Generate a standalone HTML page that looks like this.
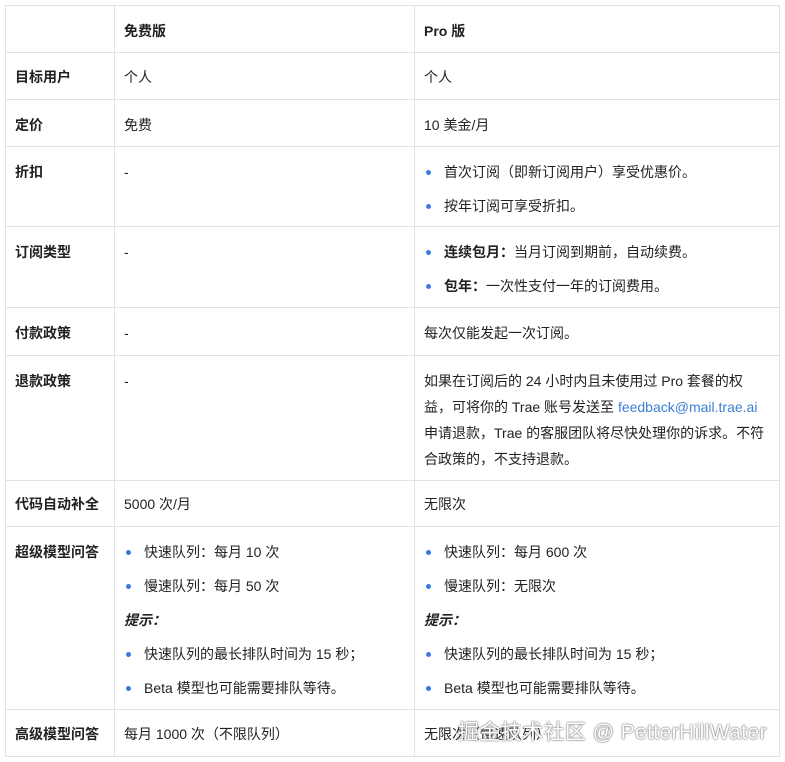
<!DOCTYPE html>
<html><head><meta charset="utf-8"><style>
body{margin:0;width:785px;height:762px;background:#fff;position:relative;overflow:hidden;font-family:"Liberation Sans","Noto Sans CJK SC",sans-serif;font-size:14px;color:#222}
.h{position:absolute;background:#e1e2e4;height:1px}
.v{position:absolute;background:#e1e2e4;width:1px}
.t{position:absolute;line-height:20px;white-space:nowrap;margin-top:1px}
.b{font-weight:bold}
.d{position:absolute;width:5px;height:5px;border-radius:50%;background:#3a7be0;margin-top:1px}
a{color:#3b7fd4;text-decoration:none}
.wm{position:absolute;left:458px;top:716px;font-size:21px;color:#fff;text-shadow:0 0 1px #555,0 0 2px #777;letter-spacing:0.4px;white-space:nowrap}
</style></head><body>
<div class="h" style="left:5px;width:775px;top:5px"></div>
<div class="h" style="left:5px;width:775px;top:52px"></div>
<div class="h" style="left:5px;width:775px;top:99px"></div>
<div class="h" style="left:5px;width:775px;top:146px"></div>
<div class="h" style="left:5px;width:775px;top:226px"></div>
<div class="h" style="left:5px;width:775px;top:307px"></div>
<div class="h" style="left:5px;width:775px;top:355px"></div>
<div class="h" style="left:5px;width:775px;top:480px"></div>
<div class="h" style="left:5px;width:775px;top:526px"></div>
<div class="h" style="left:5px;width:775px;top:709px"></div>
<div class="h" style="left:5px;width:775px;top:756px"></div>
<div class="v" style="left:5px;top:5px;height:752px"></div>
<div class="v" style="left:114px;top:5px;height:752px"></div>
<div class="v" style="left:414px;top:5px;height:752px"></div>
<div class="v" style="left:779px;top:5px;height:752px"></div>

<div class="t b" style="left:124px;top:20px">免费版</div>
<div class="t b" style="left:424px;top:20px">Pro 版</div>

<div class="t b" style="left:15px;top:66px">目标用户</div>
<div class="t" style="left:124px;top:66px">个人</div>
<div class="t" style="left:424px;top:66px">个人</div>

<div class="t b" style="left:15px;top:114px">定价</div>
<div class="t" style="left:124px;top:114px">免费</div>
<div class="t" style="left:424px;top:114px">10 美金/月</div>

<div class="t b" style="left:15px;top:161px">折扣</div>
<div class="t" style="left:124px;top:161px">-</div>
<div class="d" style="left:426px;top:169px"></div><div class="t" style="left:444px;top:161px">首次订阅（即新订阅用户）享受优惠价。</div>
<div class="d" style="left:426px;top:203px"></div><div class="t" style="left:444px;top:195px">按年订阅可享受折扣。</div>

<div class="t b" style="left:15px;top:241px">订阅类型</div>
<div class="t" style="left:124px;top:241px">-</div>
<div class="d" style="left:426px;top:249px"></div><div class="t" style="left:444px;top:241px"><b>连续包月：</b>当月订阅到期前，自动续费。</div>
<div class="d" style="left:426px;top:283px"></div><div class="t" style="left:444px;top:275px"><b>包年：</b>一次性支付一年的订阅费用。</div>

<div class="t b" style="left:15px;top:322px">付款政策</div>
<div class="t" style="left:124px;top:322px">-</div>
<div class="t" style="left:424px;top:322px">每次仅能发起一次订阅。</div>

<div class="t b" style="left:15px;top:370px">退款政策</div>
<div class="t" style="left:124px;top:370px">-</div>
<div class="t" style="left:424px;top:370px">如果在订阅后的 24 小时内且未使用过 Pro 套餐的权</div>
<div class="t" style="left:424px;top:396px">益，可将你的 Trae 账号发送至 <a>feedback@mail.trae.ai</a></div>
<div class="t" style="left:424px;top:422px">申请退款，Trae 的客服团队将尽快处理你的诉求。不符</div>
<div class="t" style="left:424px;top:448px">合政策的，不支持退款。</div>

<div class="t b" style="left:15px;top:493px">代码自动补全</div>
<div class="t" style="left:124px;top:493px">5000 次/月</div>
<div class="t" style="left:424px;top:493px">无限次</div>

<div class="t b" style="left:15px;top:541px">超级模型问答</div>
<div class="d" style="left:126px;top:549px"></div><div class="t" style="left:144px;top:541px">快速队列：每月 10 次</div>
<div class="d" style="left:126px;top:583px"></div><div class="t" style="left:144px;top:575px">慢速队列：每月 50 次</div>
<div class="t b" style="left:124px;top:609px;font-style:italic">提示：</div>
<div class="d" style="left:126px;top:651px"></div><div class="t" style="left:144px;top:643px">快速队列的最长排队时间为 15 秒；</div>
<div class="d" style="left:126px;top:685px"></div><div class="t" style="left:144px;top:677px">Beta 模型也可能需要排队等待。</div>
<div class="d" style="left:426px;top:549px"></div><div class="t" style="left:444px;top:541px">快速队列：每月 600 次</div>
<div class="d" style="left:426px;top:583px"></div><div class="t" style="left:444px;top:575px">慢速队列：无限次</div>
<div class="t b" style="left:424px;top:609px;font-style:italic">提示：</div>
<div class="d" style="left:426px;top:651px"></div><div class="t" style="left:444px;top:643px">快速队列的最长排队时间为 15 秒；</div>
<div class="d" style="left:426px;top:685px"></div><div class="t" style="left:444px;top:677px">Beta 模型也可能需要排队等待。</div>

<div class="t b" style="left:15px;top:723px">高级模型问答</div>
<div class="t" style="left:124px;top:723px">每月 1000 次（不限队列）</div>
<div class="t" style="left:424px;top:723px">无限次（慢速队列）</div>
<div class="wm">掘金技术社区 @ PetterHillWater</div>
</body></html>
